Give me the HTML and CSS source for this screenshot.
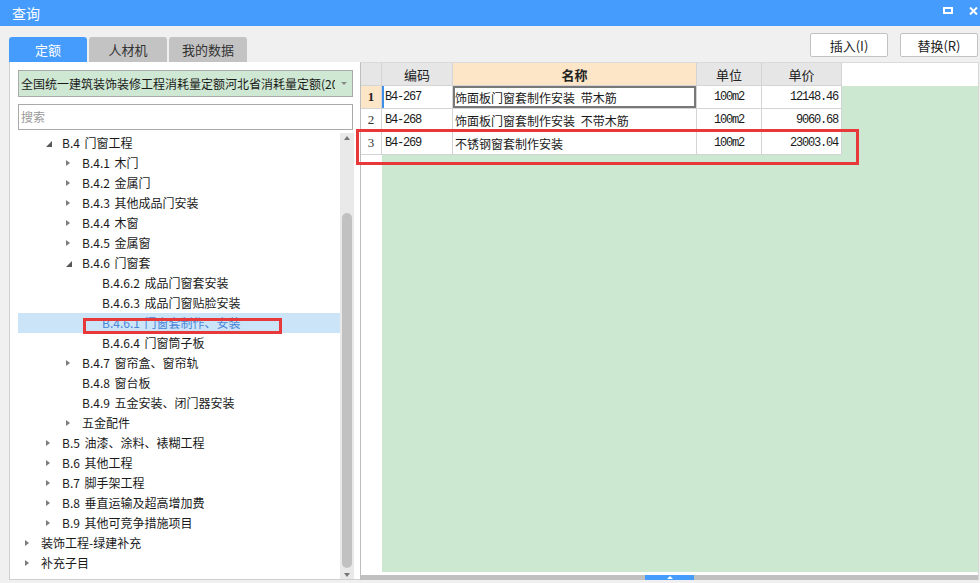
FILE: index.html
```html
<!DOCTYPE html>
<html lang="zh-CN">
<head>
<meta charset="utf-8">
<title>查询</title>
<link rel="stylesheet" href="styles.css">
</head>
<body>
<header class="titlebar">
  <span class="title">查询</span>
  <div class="win-ctrls">
    <svg class="ico" width="10" height="7" viewBox="0 0 10 7"><rect x="1" y="1" width="8" height="5" fill="none" stroke="#fff" stroke-width="2"/></svg>
    <svg class="ico" width="9" height="8" viewBox="0 0 9 8"><path d="M1 0.5 L8 7.5 M8 0.5 L1 7.5" stroke="#fff" stroke-width="2"/></svg>
  </div>
</header>
<div class="main">
  <div class="tabs">
    <div class="tab active">定额</div>
    <div class="tab">人材机</div>
    <div class="tab">我的数据</div>
  </div>
  <div class="actions">
    <button class="btn">插入(I)</button>
    <button class="btn">替换(R)</button>
  </div>
  <section class="left-panel">
    <div class="select"><span class="select-text">全国统一建筑装饰装修工程消耗量定额河北省消耗量定额(2013)</span><span class="select-arrow"></span></div>
    <div class="search">搜索</div>
    <div class="tree-wrap">
      <ul class="tree">
        <li class="l1"><span class="tg open"></span>B.4 门窗工程</li>
        <li class="l2"><span class="tg closed"></span>B.4.1 木门</li>
        <li class="l2"><span class="tg closed"></span>B.4.2 金属门</li>
        <li class="l2"><span class="tg closed"></span>B.4.3 其他成品门安装</li>
        <li class="l2"><span class="tg closed"></span>B.4.4 木窗</li>
        <li class="l2"><span class="tg closed"></span>B.4.5 金属窗</li>
        <li class="l2"><span class="tg open"></span>B.4.6 门窗套</li>
        <li class="l3"><span class="tg"></span>B.4.6.2 成品门窗套安装</li>
        <li class="l3"><span class="tg"></span>B.4.6.3 成品门窗贴脸安装</li>
        <li class="l3 sel"><span class="tg"></span>B.4.6.1 门窗套制作、安装<span class="mark-tree"></span></li>
        <li class="l3"><span class="tg"></span>B.4.6.4 门窗筒子板</li>
        <li class="l2"><span class="tg closed"></span>B.4.7 窗帘盒、窗帘轨</li>
        <li class="l2"><span class="tg"></span>B.4.8 窗台板</li>
        <li class="l2"><span class="tg"></span>B.4.9 五金安装、闭门器安装</li>
        <li class="l2"><span class="tg closed"></span>五金配件</li>
        <li class="l1"><span class="tg closed"></span>B.5 油漆、涂料、裱糊工程</li>
        <li class="l1"><span class="tg closed"></span>B.6 其他工程</li>
        <li class="l1"><span class="tg closed"></span>B.7 脚手架工程</li>
        <li class="l1"><span class="tg closed"></span>B.8 垂直运输及超高增加费</li>
        <li class="l1"><span class="tg closed"></span>B.9 其他可竞争措施项目</li>
        <li class="l0"><span class="tg closed"></span>装饰工程-绿建补充</li>
        <li class="l0"><span class="tg closed"></span>补充子目</li>
      </ul>
      <div class="vscroll">
        <span class="arr-up"></span>
        <span class="vthumb"></span>
        <span class="arr-down"></span>
      </div>
    </div>
  </section>
  <section class="sheet">
    <div class="head">
      <div class="cell c-num"></div>
      <div class="cell c-code">编码</div>
      <div class="cell c-name">名称</div>
      <div class="cell c-unit">单位</div>
      <div class="cell c-price">单价</div>
      <div class="head-fill"></div>
    </div>
    <div class="body">
      <div class="num-col">
        <div class="num cur">1</div>
        <div class="num">2</div>
        <div class="num">3</div>
      </div>
      <div class="data-col">
        <div class="row">
          <div class="cell c-code mono cur-left">B4-267</div>
          <div class="cell c-name cur-cell">饰面板门窗套制作安装 带木筋</div>
          <div class="cell c-unit mono">100m2</div>
          <div class="cell c-price mono">12148.46</div>
        </div>
        <div class="row">
          <div class="cell c-code mono">B4-268</div>
          <div class="cell c-name">饰面板门窗套制作安装 不带木筋</div>
          <div class="cell c-unit mono">100m2</div>
          <div class="cell c-price mono">9060.68</div>
        </div>
        <div class="row">
          <div class="cell c-code mono">B4-269</div>
          <div class="cell c-name">不锈钢窗套制作安装</div>
          <div class="cell c-unit mono">100m2</div>
          <div class="cell c-price mono">23003.04</div>
        </div>
      </div>
    </div>
    <div class="foot-gap"></div>
    <div class="hscroll"><span class="hthumb"></span></div>
    <span class="mark-row"></span>
  </section>
</div>
</body>
</html>
```
FILE: styles.css
```css
* { box-sizing: border-box; }
html, body { margin: 0; padding: 0; }
body {
  width: 980px;
  height: 583px;
  overflow: hidden;
  background: #f0f0f0;
  font-family: "Noto Sans CJK SC", "Noto Sans", sans-serif;
  font-size: 12px;
  color: #222;
}

/* title bar */
.titlebar {
  height: 26px;
  background: #459cfd;
  color: #fff;
  display: flex;
  justify-content: space-between;
  padding: 0 2px 0 12px;
}
.title { font-size: 14px; line-height: 26px; }
.win-ctrls {
  display: flex;
  align-items: flex-start;
  gap: 16px;
  padding-top: 7px;
}
.ico { display: block; }

/* main grid */
.main {
  display: grid;
  grid-template-columns: 351px 619px;
  grid-template-rows: 36px 518px;
  padding-left: 9px;
}

.tabs { display: flex; gap: 2px; align-self: end; }
.tab {
  width: 78px;
  height: 25px;
  line-height: 25px;
  text-align: center;
  font-size: 13px;
  background: #c3c3c3;
  color: #333;
  border-radius: 3px 3px 0 0;
}
.tab.active { background: #459cfd; color: #fff; }

.actions {
  display: flex;
  justify-content: flex-end;
  gap: 12px;
  padding: 7px 1px 0 0;
}
.btn {
  width: 78px;
  height: 24px;
  padding: 0;
  border: 1px solid #c2c2c2;
  border-radius: 2px;
  background: #fff;
  color: #222;
  font: 13px "Noto Sans CJK SC", "Noto Sans", sans-serif;
}

/* left panel */
.left-panel {
  background: #fff;
  border-left: 1px solid #cfcfcf;
  border-bottom: 1px solid #cfcfcf;
  padding: 8px 5px 0 8px;
  display: flex;
  flex-direction: column;
}
.select {
  width: 335px;
  height: 27px;
  border: 1px solid #a9a9a9;
  background: #cfe8d3;
  display: flex;
  align-items: center;
  padding-left: 2px;
}
.select-text { width: 314px; overflow: hidden; white-space: nowrap; line-height: 25px; color: #1a1a1a; }
.select-arrow { flex: 1; display: flex; justify-content: center; align-items: center; }
.select-arrow::before {
  content: "";
  border-top: 3px solid #8a8a8a;
  border-left: 3px solid transparent;
  border-right: 3px solid transparent;
}
.search {
  margin-top: 7px;
  width: 335px;
  height: 26px;
  border: 1px solid #a9a9a9;
  padding-left: 2px;
  line-height: 24px;
  color: #9a9a9a;
}
.tree-wrap { margin-top: 3px; height: 446px; display: flex; }
.tree {
  width: 322px;
  list-style: none;
  margin: 0;
  padding: 0;
  overflow: hidden;
}
.tree li {
  height: 20px;
  line-height: 20px;
  display: flex;
  align-items: center;
  white-space: nowrap;
  color: #1a1a1a;
  word-spacing: 2px;
}
.tree .l0 { padding-left: 7px; }
.tree .l1 { padding-left: 28px; }
.tree .l2 { padding-left: 48px; }
.tree .l3 { padding-left: 68px; }
.tg { width: 16px; height: 20px; flex: none; display: flex; align-items: center; }
.tg.closed::before {
  content: "";
  border-left: 4px solid #7c7c7c;
  border-top: 3.5px solid transparent;
  border-bottom: 3.5px solid transparent;
}
.tg.open::before {
  content: "";
  margin-top: 2px;
  border-bottom: 6px solid #585858;
  border-left: 6px solid transparent;
}
.tree li.sel { background: #cce4f8; color: #4a86d8; position: relative; }
.mark-tree {
  position: absolute;
  left: 65px;
  top: 5px;
  width: 199px;
  height: 16px;
  border: 3px solid #e8393a;
}

.vscroll {
  width: 14px;
  background: #e9e9e9;
  display: flex;
  flex-direction: column;
  align-items: center;
}
.arr-up {
  margin-top: 3px;
  border-bottom: 4px solid #777;
  border-left: 3.5px solid transparent;
  border-right: 3.5px solid transparent;
}
.vthumb {
  margin-top: 73px;
  width: 10px;
  height: 355px;
  border-radius: 5px;
  background: #c1c1c1;
}
.arr-down {
  margin-top: 5px;
  border-top: 4px solid #777;
  border-left: 3.5px solid transparent;
  border-right: 3.5px solid transparent;
}

/* sheet */
.sheet {
  position: relative;
  background: #fff;
  border-left: 1px solid #bdbdbd;
  border-top: 1px solid #dadada;
  border-right: 1px solid #d6d6d6;
  display: flex;
  flex-direction: column;
}
.head { display: flex; height: 23px; flex: none; }
.cell {
  flex: none;
  height: 100%;
  display: flex;
  align-items: center;
  white-space: nowrap;
  border-right: 1px solid #d4d4d4;
  border-bottom: 1px solid #d4d4d4;
}
.head .cell { background: #e6e6e6; justify-content: center; color: #222; font-size: 13px; }
.head .c-name { background: #fde6c8; font-weight: bold; }
.head-fill { flex: 1; }
.c-num { width: 21px; }
.c-code { width: 71px; }
.c-name { width: 244px; }
.c-unit { width: 65px; }
.c-price { width: 80px; }

.body { flex: 1; display: flex; }
.num-col { width: 21px; background: #fff; }
.num {
  width: 21px;
  height: 23px;
  display: flex;
  align-items: center;
  justify-content: center;
  border-right: 1px solid #d4d4d4;
  border-bottom: 1px solid #d4d4d4;
  font-family: "Liberation Serif", serif;
  font-size: 13px;
  color: #333;
}
.num.cur { background: #fde6c8; font-weight: bold; color: #222; }
.data-col { flex: 1; background: #cde8d0; }
.row { display: flex; height: 23px; }
.row .cell { background: #fff; color: #1a1a1a; }
.row .c-code { padding-left: 3px; }
.row .c-name { padding-left: 2px; word-spacing: 3px; }
.row .c-unit { justify-content: center; }
.row .c-price { justify-content: flex-end; padding-right: 3px; }
.mono { font-family: "Liberation Mono", monospace; font-size: 12px; letter-spacing: -1.2px; }
.cur-left { box-shadow: inset 2px 0 0 #3d8fe8; }
.cur-cell { box-shadow: inset 0 0 0 2px #787878; }

.foot-gap { height: 3px; background: #fff; flex: none; }
.hscroll { height: 5px; background: #c0c0c0; display: flex; flex: none; }
.hthumb {
  margin-left: 284px;
  width: 49px;
  background: #459cfd;
  display: flex;
  justify-content: center;
  align-items: center;
}
.hthumb::before {
  content: "";
  border-bottom: 3px solid #fff;
  border-left: 3px solid transparent;
  border-right: 3px solid transparent;
}
.mark-row {
  position: absolute;
  left: -5px;
  top: 66px;
  width: 503px;
  height: 36px;
  border: 3px solid #e8393a;
}
```
